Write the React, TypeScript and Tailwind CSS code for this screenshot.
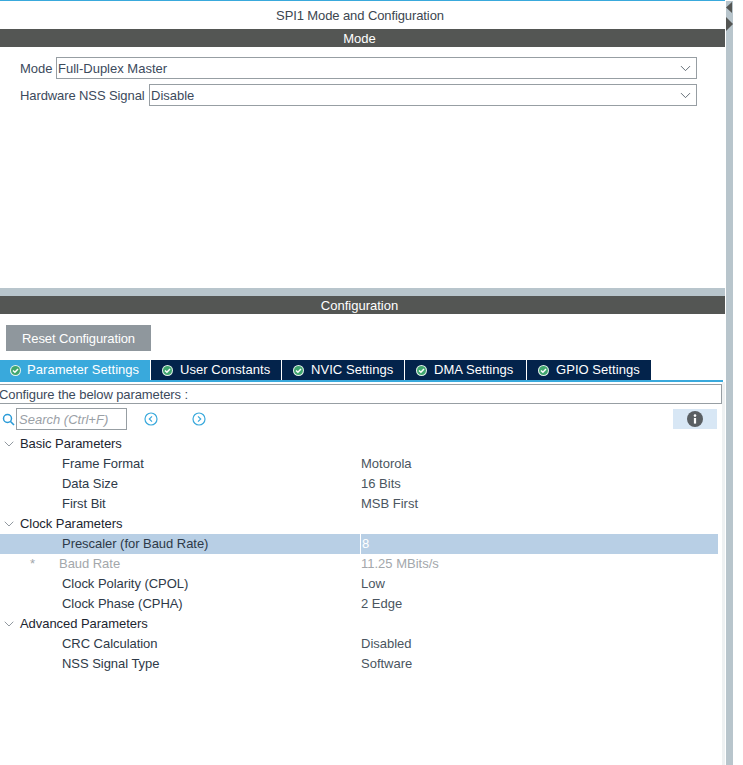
import React from 'react';
import { ChevronDown } from 'lucide-react';

const TABS = [
    { label: 'Parameter Settings', width: 'w-[150px]', active: true },
    { label: 'User Constants', width: 'w-[131px]', active: false },
    { label: 'NVIC Settings', width: 'w-[123px]', active: false },
    { label: 'DMA Settings', width: 'w-[122px]', active: false },
    { label: 'GPIO Settings', width: 'w-[125px]', active: false },
];

type Row = { label: string; value?: string; kind: 'group' | 'item' | 'selected' | 'derived' };

const ROWS: Row[] = [
    { label: 'Basic Parameters', kind: 'group' },
    { label: 'Frame Format', value: 'Motorola', kind: 'item' },
    { label: 'Data Size', value: '16 Bits', kind: 'item' },
    { label: 'First Bit', value: 'MSB First', kind: 'item' },
    { label: 'Clock Parameters', kind: 'group' },
    { label: 'Prescaler (for Baud Rate)', value: '8', kind: 'selected' },
    { label: 'Baud Rate', value: '11.25 MBits/s', kind: 'derived' },
    { label: 'Clock Polarity (CPOL)', value: 'Low', kind: 'item' },
    { label: 'Clock Phase (CPHA)', value: '2 Edge', kind: 'item' },
    { label: 'Advanced Parameters', kind: 'group' },
    { label: 'CRC Calculation', value: 'Disabled', kind: 'item' },
    { label: 'NSS Signal Type', value: 'Software', kind: 'item' },
];

const CheckBadge = () => (
    <svg width="11" height="11" viewBox="0 0 11 11" className="shrink-0">
        <circle cx="5.5" cy="5.5" r="5.5" fill="#e4f3ea" />
        <circle cx="5.5" cy="5.5" r="4.5" fill="#3fa66f" />
        <path d="M3 5.5 L4.9 7.3 L8 4" fill="none" stroke="#ffffff" strokeWidth="1.5" />
    </svg>
);

const SectionBar = ({ title }: { title: string }) => (
    <div className="h-[18px] bg-[#545654] text-white text-center leading-[19px] pr-[6px]">{title}</div>
);

const SelectBox = ({ value, width }: { value: string; width: string }) => (
    <div className={`${width} h-[22px] border border-[#979ea3] flex items-center justify-between pl-[1px] pr-[2px] text-[#3c4a5c]`}>
        <span className="pt-px">{value}</span>
        <ChevronDown size={17} strokeWidth={1.2} className="text-[#4a5560]" />
    </div>
);

const CircleArrow = ({ dir }: { dir: 'left' | 'right' }) => (
    <svg width="14" height="14" viewBox="0 0 14 14">
        <circle cx="7" cy="7" r="6" fill="none" stroke="#39a9dc" strokeWidth="1.2" />
        <path d={dir === 'left' ? 'M8 4.3 L5.3 7 L8 9.7' : 'M6 4.3 L8.7 7 L6 9.7'} fill="none" stroke="#39a9dc" strokeWidth="1.2" />
    </svg>
);

export default function App() {
    return (
        <div className="w-[743px] h-[765px] overflow-hidden bg-white flex text-[13px] font-['Liberation_Sans',Arial,sans-serif]">
            <div className="w-[725px] shrink-0 flex flex-col">
                <div className="h-px bg-[#39a9dc]" />
                <div className="h-[28px] text-center leading-[30px] pr-[5px] tracking-[-0.1px] text-[#3c4650]">SPI1 Mode and Configuration</div>
                <SectionBar title="Mode" />

                {/* Mode panel */}
                <div className="h-[241px] pt-[10px] flex flex-col gap-[5px]">
                    <div className="flex items-center pl-[20px] text-[#3c4a5c]">
                        <span className="w-[36px] pt-px">Mode</span>
                        <SelectBox value="Full-Duplex Master" width="w-[641px]" />
                    </div>
                    <div className="flex items-center pl-[20px] text-[#3c4a5c]">
                        <span className="w-[129px] pt-px tracking-[-0.1px]">Hardware NSS Signal</span>
                        <SelectBox value="Disable" width="w-[548px]" />
                    </div>
                </div>

                <div className="h-[8px] bg-[#b8c5cc]" />
                <SectionBar title="Configuration" />

                {/* Configuration panel */}
                <div className="relative flex-1 flex flex-col">
                    <div className="h-[46px] pt-[11px] pl-[6px]">
                        <button className="w-[145px] h-[26px] pt-px bg-[#8f979d] text-white tracking-[-0.1px]">Reset Configuration</button>
                    </div>

                    <div className="flex h-[20px]">
                        {TABS.map((tab) => (
                            <div
                                key={tab.label}
                                className={`${tab.width} ${tab.active ? 'bg-[#39a9dc] gap-[6px] pl-[10px]' : 'bg-[#03234b] border-l border-white gap-[7px] pl-[11px]'} flex items-center text-white`}
                            >
                                <CheckBadge />
                                <span className="tracking-[0.05px]">{tab.label}</span>
                            </div>
                        ))}
                    </div>
                    <div className="h-[2px] w-[723px] bg-[#39a9dc]" />

                    <div className="flex w-[722px] h-[20px] mt-[2px] border border-l-0 border-[#979ea3] items-center text-[#3c4a5c] overflow-hidden">
                        <span className="-ml-[1px] pt-px tracking-[-0.1px]">Configure the below parameters :</span>
                    </div>

                    <div className="w-[718px] h-[22px] mt-[4px] flex items-center">
                        <svg width="13" height="13" viewBox="0 0 13 13" className="ml-[2px] shrink-0">
                            <circle cx="5.5" cy="5.5" r="4" fill="none" stroke="#2a9bd8" strokeWidth="1.5" />
                            <path d="M8.5 8.5 L12 12" stroke="#2a9bd8" strokeWidth="1.6" />
                        </svg>
                        <div className="w-[111px] h-[22px] ml-[1px] border border-[#979ea3] flex items-center pl-[2px] pt-px italic text-[#9aa0a6]">Search (Ctrl+F)</div>
                        <div className="ml-[17px] flex gap-[34px]">
                            <CircleArrow dir="left" />
                            <CircleArrow dir="right" />
                        </div>
                        <div className="ml-auto mr-[1px] w-[44px] h-[20px] bg-[#d8e7f5] flex items-center justify-center">
                            <svg width="16" height="16" viewBox="0 0 16 16">
                                <circle cx="8" cy="8" r="8" fill="#5a5f63" />
                                <rect x="6.9" y="7" width="2.2" height="5.6" fill="#ffffff" />
                                <circle cx="8" cy="4.6" r="1.3" fill="#ffffff" />
                            </svg>
                        </div>
                    </div>

                    {/* Parameter tree */}
                    <div className="w-[718px] mt-[4px] flex flex-col">
                        {ROWS.map((row) => {
                            if (row.kind === 'group') {
                                return (
                                    <div key={row.label} className="h-[20px] flex items-center text-[#1c2530] tracking-[-0.05px]">
                                        <ChevronDown size={16} strokeWidth={1} className="ml-[1px] mr-[3px] text-[#5a6570]" />
                                        <span>{row.label}</span>
                                    </div>
                                );
                            }
                            const selected = row.kind === 'selected';
                            const derived = row.kind === 'derived';
                            return (
                                <div key={row.label} className={`h-[20px] flex items-center ${selected ? 'bg-[#b8cfe5]' : ''} ${derived ? 'text-[#a3a7ab]' : 'text-[#2e3a48]'}`}>
                                    <div className={`w-[360px] shrink-0 ${derived ? 'pl-[30px]' : 'pl-[62px]'} flex tracking-[-0.04px]`}>
                                        {derived && <span className="w-[29px]">*</span>}
                                        <span>{row.label}</span>
                                    </div>
                                    <div className={`h-full flex-1 flex items-center pl-[1px] ${selected ? 'border-l border-white text-white' : ''} ${row.kind === 'item' ? 'text-[#4a5560]' : ''}`}>
                                        {row.value}
                                    </div>
                                </div>
                            );
                        })}
                    </div>

                    {/* Scroll track */}
                    <div className="absolute right-0 top-[68px] bottom-0 w-[3px] bg-[#eef1f2]" />
                </div>
            </div>

            {/* Splitter */}
            <div className="relative w-[7px] h-full pt-px ml-px shrink-0">
                <div className="h-full bg-[#b8c5cc]" />
                <svg width="7" height="36" viewBox="0 0 7 36" className="absolute left-0 top-0">
                    <path d="M6 2 L0 7.5 L6 13 Z" fill="#545654" />
                    <path d="M0 17 L7 24 L0 31 Z" fill="#545654" />
                </svg>
            </div>
        </div>
    );
}
